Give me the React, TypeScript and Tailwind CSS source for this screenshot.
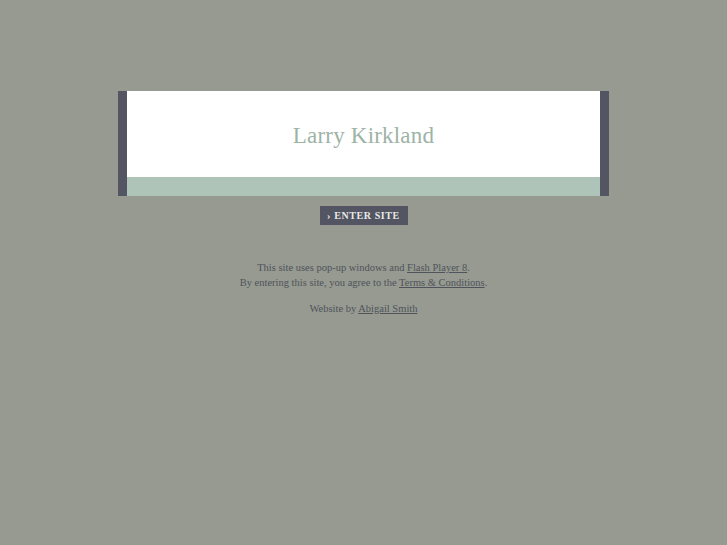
export default function App() {
  return (
    <div className="min-h-[545px] bg-[#969a90] pt-[91px] font-['Liberation_Serif',serif]">
      <div className="mx-auto flex w-[491px] h-[105px]">
        <div className="w-[9px] bg-[#535563]" />
        <div className="flex flex-1 flex-col">
          <div className="flex flex-1 items-center justify-center bg-white pt-[4px]">
            <h1 className="text-[23px] text-[#9db3a6] tracking-[0.2px]">Larry Kirkland</h1>
          </div>
          <div className="h-[19px] bg-[#afc4b8]" />
        </div>
        <div className="w-[9px] bg-[#535563]" />
      </div>

      <div className="mt-[10px] flex justify-center">
        <a href="#" className="flex h-[19px] w-[88px] items-center justify-center bg-[#535563] text-[10px] font-bold tracking-[0.6px] text-[#e8eae6]">
          › ENTER SITE
        </a>
      </div>

      <div className="mt-[35px] text-center text-[10.5px] leading-[15px] text-[#4f535c]">
        <p>
          This site uses pop-up windows and <a href="#" className="underline">Flash Player 8</a>.
        </p>
        <p>
          By entering this site, you agree to the <a href="#" className="underline">Terms &amp; Conditions</a>.
        </p>
        <p className="mt-[11px]">
          Website by <a href="#" className="underline">Abigail Smith</a>
        </p>
      </div>
    </div>
  )
}
